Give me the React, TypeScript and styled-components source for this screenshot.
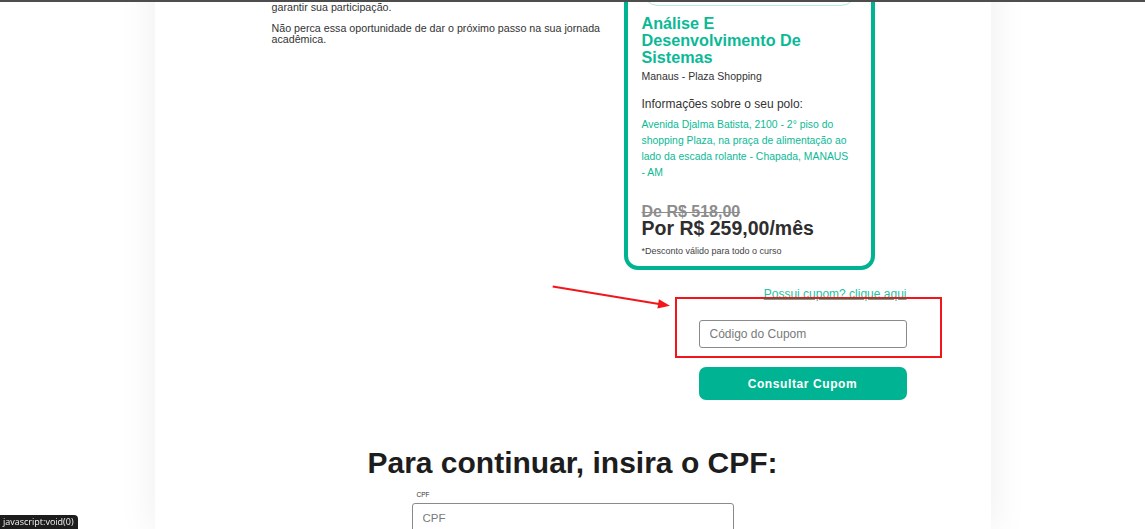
import React from 'react'
import styled, { createGlobalStyle } from 'styled-components'

const GlobalStyle = createGlobalStyle`
  html, body {
    margin: 0;
    padding: 0;
    background: #fff;
    overflow: hidden;
  }
  body {
    font-family: 'Liberation Sans', Arial, sans-serif;
    color: #333;
  }
  * {
    box-sizing: border-box;
  }
`

const green = '#00b493'
const textGreen = '#0bb996'

const App: React.FC = () => {
  return (
    <>
      <GlobalStyle />
      <TopEdge />
      <Page>
        <OfferRow>
          <Intro>
            <IntroText>
              Estamos muito felizes em ter você conosco! Confira abaixo os
              <br />
              detalhes do curso escolhido e finalize sua inscrição para
              <br />
              garantir sua participação.
            </IntroText>
            <IntroText>
              Não perca essa oportunidade de dar o próximo passo na sua jornada acadêmica.
            </IntroText>
          </Intro>
          <Card>
            <CardTag>Graduação EAD</CardTag>
            <CourseTitle>Análise E Desenvolvimento De Sistemas</CourseTitle>
            <Campus>Manaus - Plaza Shopping</Campus>
            <PoloLabel>Informações sobre o seu polo:</PoloLabel>
            <PoloAddress>
              Avenida Djalma Batista, 2100 - 2° piso do shopping Plaza, na praça de alimentação
              ao lado da escada rolante - Chapada, MANAUS - AM
            </PoloAddress>
            <OldPrice>De R$ 518,00</OldPrice>
            <NewPrice>Por R$ 259,00/mês</NewPrice>
            <Disclaimer>*Desconto válido para todo o curso</Disclaimer>
          </Card>
        </OfferRow>

        <CouponArea>
          <CouponLink href="javascript:void(0)">Possui cupom? clique aqui</CouponLink>
          <CouponInput placeholder="Código do Cupom" />
          <CouponButton type="button">Consultar Cupom</CouponButton>
          <Highlight />
          <Arrow width="125" height="32" viewBox="0 0 125 32">
            <line x1="2.7" y1="6.4" x2="109" y2="23.9" stroke="#f2161b" strokeWidth="2" />
            <polygon points="120,25.7 107.4,28.4 108.9,19.2" fill="#f2161b" />
          </Arrow>
        </CouponArea>

        <CpfSection>
          <CpfTitle>Para continuar, insira o CPF:</CpfTitle>
          <CpfField>
            <CpfLabel>CPF</CpfLabel>
            <CpfInput placeholder="CPF" />
          </CpfField>
        </CpfSection>
      </Page>
      <StatusTip>javascript:void(0)</StatusTip>
    </>
  )
}

const TopEdge = styled.div`
  position: fixed;
  top: 0;
  left: 0;
  right: 0;
  height: 2px;
  background: #4d4d4d;
  z-index: 5;
`

const Page = styled.main`
  width: 836px;
  margin: 0 auto;
  min-height: 100vh;
  background: #fff;
  box-shadow: 0 0 38px rgba(0, 0, 0, 0.07);
`

const OfferRow = styled.section`
  display: flex;
  align-items: flex-start;
  gap: 12px;
  margin-top: -44px;
  padding-left: 117px;
`

const Intro = styled.div`
  width: 340px;
  padding-top: 22.5px;
`

const IntroText = styled.p`
  margin: 0 0 9.5px;
  font-size: 10.7px;
  line-height: 11.5px;
  color: #333;
`

const Card = styled.div`
  width: 251px;
  border: 4px solid ${green};
  border-radius: 14px;
  padding: 14px 14px 10px;
  background: #fff;
`

const CardTag = styled.div`
  height: 32px;
  border: 1px solid #b4e9dc;
  border-radius: 16px;
  display: flex;
  align-items: center;
  justify-content: center;
  font-size: 11px;
  color: ${textGreen};
`

const CourseTitle = styled.h2`
  max-width: 190px;
  margin: 9.4px 0 0;
  font-size: 16.2px;
  line-height: 16.8px;
  font-weight: 700;
  color: ${textGreen};
`

const Campus = styled.div`
  margin-top: 4.5px;
  font-size: 10.5px;
  color: #333;
`

const PoloLabel = styled.div`
  margin-top: 16px;
  font-size: 12px;
  line-height: 13.8px;
  color: #333;
`

const PoloAddress = styled.div`
  margin-top: 5px;
  padding-right: 3px;
  font-size: 10.4px;
  line-height: 16px;
  color: ${textGreen};
`

const OldPrice = styled.div`
  margin-top: 24px;
  font-size: 16px;
  line-height: 14px;
  font-weight: 700;
  color: #8c8c8c;
  text-decoration: line-through;
`

const NewPrice = styled.div`
  font-size: 19.5px;
  line-height: 18px;
  font-weight: 700;
  color: #2e2e2e;
`

const Disclaimer = styled.div`
  margin-top: 8.8px;
  font-size: 9px;
  color: #444;
`

const CouponArea = styled.section`
  position: relative;
  display: flex;
  flex-direction: column;
  align-items: flex-end;
  padding-right: 84px;
`

const CouponLink = styled.a`
  margin-top: 18.4px;
  font-size: 12px;
  line-height: 13.8px;
  color: #25c2a3;
  text-decoration: underline;
`

const CouponInput = styled.input`
  margin-top: 17.7px;
  width: 208px;
  height: 28.4px;
  padding: 0 10px;
  border: 1px solid #8a8a8a;
  border-radius: 3px;
  font-family: 'Liberation Sans', Arial, sans-serif;
  font-size: 12px;
  color: #333;
  outline: none;

  &::placeholder {
    color: #7a7a7a;
  }
`

const CouponButton = styled.button`
  margin-top: 19px;
  width: 208px;
  height: 33.3px;
  border: none;
  border-radius: 7px;
  background: ${green};
  color: #fff;
  font-family: 'Liberation Sans', Arial, sans-serif;
  font-size: 12px;
  font-weight: 700;
  letter-spacing: 0.6px;
  cursor: pointer;
`

const Highlight = styled.div`
  position: absolute;
  left: 520px;
  top: 27.4px;
  width: 267px;
  height: 60.6px;
  border: 2px solid #f2161b;
  background: transparent;
  pointer-events: none;
`

const Arrow = styled.svg`
  position: absolute;
  left: 395px;
  top: 10px;
  overflow: visible;
  pointer-events: none;
`

const CpfSection = styled.section`
  display: flex;
  flex-direction: column;
  align-items: center;
  padding-top: 45.7px;
`

const CpfTitle = styled.h1`
  margin: 0;
  font-size: 30px;
  font-weight: 700;
  color: #1d1d1d;
`

const CpfField = styled.div`
  width: 322px;
  margin-top: 11px;
  display: flex;
  flex-direction: column;
`

const CpfLabel = styled.label`
  padding-left: 5px;
  font-size: 6.5px;
  line-height: 8px;
  color: #333;
`

const CpfInput = styled.input`
  margin-top: 4px;
  width: 100%;
  height: 30px;
  padding: 0 10px;
  border: 1px solid #8a8a8a;
  border-radius: 3px;
  font-family: 'Liberation Sans', Arial, sans-serif;
  font-size: 11.5px;
  outline: none;

  &::placeholder {
    color: #7a7a7a;
  }
`

const StatusTip = styled.div`
  position: fixed;
  left: 0;
  bottom: 0;
  height: 14px;
  padding: 0 4px 0 3px;
  background: #1c1c1c;
  border-top-right-radius: 4px;
  color: #f2f2f2;
  font-size: 9px;
  line-height: 14px;
  font-family: 'Open Sans', 'Liberation Sans', sans-serif;
`

export default App
